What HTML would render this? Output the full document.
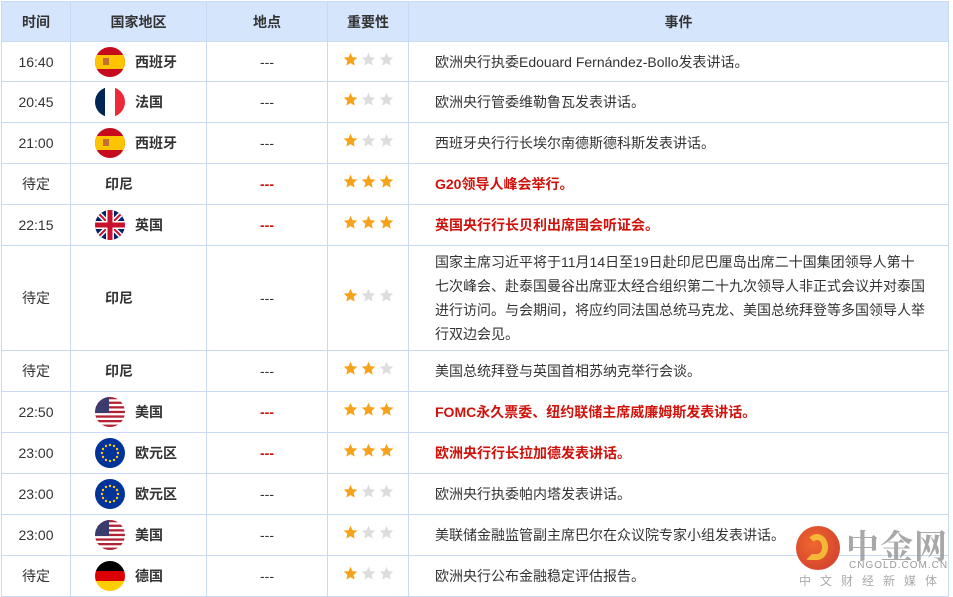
<!DOCTYPE html>
<html><head><meta charset="utf-8"><style>
*{margin:0;padding:0;box-sizing:border-box}
body{width:953px;height:597px;background:#fff;position:relative;overflow:hidden;font-family:"Liberation Sans","Noto Sans CJK SC",sans-serif;font-size:14px;color:#333}
.r{position:absolute;left:1px;width:948px;border-bottom:1px solid #c8daf5}
.c{position:absolute;top:0;height:100%;display:flex;align-items:center;border-right:1px solid #c8daf5}
.h{background:#d5e5fc;font-weight:bold;color:#333}
.c1{left:0;width:70px;justify-content:center;border-left:1px solid #c8daf5}
.c2{left:70px;width:136px}
.c3{left:206px;width:121px;justify-content:center}
.c4{left:327px;width:81px;padding-left:15px}
.c5{left:408px;width:540px;padding-left:26px;line-height:22px}
.h .c{justify-content:center;padding:0}
.flag{width:30px;height:30px;margin-left:24px;margin-right:10px;border-radius:50%;overflow:hidden;flex:none}
.nf{padding-left:34px}
.red{color:#d0120b;font-weight:bold}
.st{display:flex;gap:3px;margin-top:-5px}
</style></head><body>
<svg width="0" height="0" style="position:absolute"><defs>
<symbol id="s" viewBox="0 0 20 20"><path d="M10 1l2.6 5.9 6.4.6-4.8 4.3 1.4 6.3L10 14.8 4.4 18.1l1.4-6.3L1 7.5l6.4-.6z"/></symbol>
<symbol id="es" viewBox="0 0 30 30"><rect width="30" height="30" fill="#c60b1e"/><rect y="8" width="30" height="14" fill="#ffc400"/><rect x="8" y="11" width="6" height="7" fill="#c07030"/></symbol>
<symbol id="fr" viewBox="0 0 30 30"><rect width="10" height="30" fill="#002654"/><rect x="10" width="10" height="30" fill="#fff"/><rect x="20" width="10" height="30" fill="#ed2939"/></symbol>
<symbol id="gb" viewBox="0 0 30 30"><rect width="30" height="30" fill="#012169"/><path d="M0 0L30 30M30 0L0 30" stroke="#fff" stroke-width="5"/><path d="M0 0L30 30M30 0L0 30" stroke="#c8102e" stroke-width="2"/><path d="M15 0V30M0 15H30" stroke="#fff" stroke-width="8"/><path d="M15 0V30M0 15H30" stroke="#c8102e" stroke-width="5"/></symbol>
<symbol id="us" viewBox="0 0 30 30"><rect width="30" height="30" fill="#fff"/><g fill="#b22234"><rect y="0" width="30" height="2.3"/><rect y="4.6" width="30" height="2.3"/><rect y="9.2" width="30" height="2.3"/><rect y="13.8" width="30" height="2.3"/><rect y="18.4" width="30" height="2.3"/><rect y="23" width="30" height="2.3"/><rect y="27.6" width="30" height="2.4"/></g><rect width="14" height="16" fill="#3c3b6e"/></symbol>
<symbol id="eu" viewBox="0 0 30 30"><rect width="30" height="30" fill="#003399"/><g fill="#ffcc00"><circle cx="15" cy="7" r="1.2"/><circle cx="15" cy="23" r="1.2"/><circle cx="7" cy="15" r="1.2"/><circle cx="23" cy="15" r="1.2"/><circle cx="19" cy="8" r="1.2"/><circle cx="11" cy="8" r="1.2"/><circle cx="19" cy="22" r="1.2"/><circle cx="11" cy="22" r="1.2"/><circle cx="8" cy="11" r="1.2"/><circle cx="22" cy="11" r="1.2"/><circle cx="8" cy="19" r="1.2"/><circle cx="22" cy="19" r="1.2"/></g></symbol>
<symbol id="de" viewBox="0 0 30 30"><rect width="30" height="10" fill="#000"/><rect y="10" width="30" height="10" fill="#dd0000"/><rect y="20" width="30" height="10" fill="#ffce00"/></symbol>
</defs></svg>

<div class="r h" style="top:1px;height:41px;border-top:1px solid #c8daf5"><div class="c c1">时间</div><div class="c c2">国家地区</div><div class="c c3">地点</div><div class="c c4">重要性</div><div class="c c5">事件</div></div>

<div class="r" style="top:42px;height:40px"><div class="c c1">16:40</div><div class="c c2"><svg class="flag"><use href="#es"/></svg><b>西班牙</b></div><div class="c c3">---</div><div class="c c4"><div class="st"><svg width="15" height="15" fill="#f7a21b"><use href="#s"/></svg><svg width="15" height="15" fill="#ddd"><use href="#s"/></svg><svg width="15" height="15" fill="#ddd"><use href="#s"/></svg></div></div><div class="c c5">欧洲央行执委Edouard Fernández-Bollo发表讲话。</div></div>

<div class="r" style="top:82px;height:41px"><div class="c c1">20:45</div><div class="c c2"><svg class="flag"><use href="#fr"/></svg><b>法国</b></div><div class="c c3">---</div><div class="c c4"><div class="st"><svg width="15" height="15" fill="#f7a21b"><use href="#s"/></svg><svg width="15" height="15" fill="#ddd"><use href="#s"/></svg><svg width="15" height="15" fill="#ddd"><use href="#s"/></svg></div></div><div class="c c5">欧洲央行管委维勒鲁瓦发表讲话。</div></div>

<div class="r" style="top:123px;height:41px"><div class="c c1">21:00</div><div class="c c2"><svg class="flag"><use href="#es"/></svg><b>西班牙</b></div><div class="c c3">---</div><div class="c c4"><div class="st"><svg width="15" height="15" fill="#f7a21b"><use href="#s"/></svg><svg width="15" height="15" fill="#ddd"><use href="#s"/></svg><svg width="15" height="15" fill="#ddd"><use href="#s"/></svg></div></div><div class="c c5">西班牙央行行长埃尔南德斯德科斯发表讲话。</div></div>

<div class="r" style="top:164px;height:41px"><div class="c c1">待定</div><div class="c c2 nf"><b>印尼</b></div><div class="c c3 red">---</div><div class="c c4"><div class="st"><svg width="15" height="15" fill="#f7a21b"><use href="#s"/></svg><svg width="15" height="15" fill="#f7a21b"><use href="#s"/></svg><svg width="15" height="15" fill="#f7a21b"><use href="#s"/></svg></div></div><div class="c c5 red">G20领导人峰会举行。</div></div>

<div class="r" style="top:205px;height:41px"><div class="c c1">22:15</div><div class="c c2"><svg class="flag"><use href="#gb"/></svg><b>英国</b></div><div class="c c3 red">---</div><div class="c c4"><div class="st"><svg width="15" height="15" fill="#f7a21b"><use href="#s"/></svg><svg width="15" height="15" fill="#f7a21b"><use href="#s"/></svg><svg width="15" height="15" fill="#f7a21b"><use href="#s"/></svg></div></div><div class="c c5 red">英国央行行长贝利出席国会听证会。</div></div>

<div class="r" style="top:246px;height:105px"><div class="c c1">待定</div><div class="c c2 nf"><b>印尼</b></div><div class="c c3">---</div><div class="c c4"><div class="st"><svg width="15" height="15" fill="#f7a21b"><use href="#s"/></svg><svg width="15" height="15" fill="#ddd"><use href="#s"/></svg><svg width="15" height="15" fill="#ddd"><use href="#s"/></svg></div></div><div class="c c5" style="line-height:24px;white-space:nowrap">国家主席习近平将于11月14日至19日赴印尼巴厘岛出席二十国集团领导人第十<br>七次峰会、赴泰国曼谷出席亚太经合组织第二十九次领导人非正式会议并对泰国<br>进行访问。与会期间，将应约同法国总统马克龙、美国总统拜登等多国领导人举<br>行双边会见。</div></div>

<div class="r" style="top:351px;height:41px"><div class="c c1">待定</div><div class="c c2 nf"><b>印尼</b></div><div class="c c3">---</div><div class="c c4"><div class="st"><svg width="15" height="15" fill="#f7a21b"><use href="#s"/></svg><svg width="15" height="15" fill="#f7a21b"><use href="#s"/></svg><svg width="15" height="15" fill="#ddd"><use href="#s"/></svg></div></div><div class="c c5">美国总统拜登与英国首相苏纳克举行会谈。</div></div>

<div class="r" style="top:392px;height:41px"><div class="c c1">22:50</div><div class="c c2"><svg class="flag"><use href="#us"/></svg><b>美国</b></div><div class="c c3 red">---</div><div class="c c4"><div class="st"><svg width="15" height="15" fill="#f7a21b"><use href="#s"/></svg><svg width="15" height="15" fill="#f7a21b"><use href="#s"/></svg><svg width="15" height="15" fill="#f7a21b"><use href="#s"/></svg></div></div><div class="c c5 red">FOMC永久票委、纽约联储主席威廉姆斯发表讲话。</div></div>

<div class="r" style="top:433px;height:41px"><div class="c c1">23:00</div><div class="c c2"><svg class="flag"><use href="#eu"/></svg><b>欧元区</b></div><div class="c c3 red">---</div><div class="c c4"><div class="st"><svg width="15" height="15" fill="#f7a21b"><use href="#s"/></svg><svg width="15" height="15" fill="#f7a21b"><use href="#s"/></svg><svg width="15" height="15" fill="#f7a21b"><use href="#s"/></svg></div></div><div class="c c5 red">欧洲央行行长拉加德发表讲话。</div></div>

<div class="r" style="top:474px;height:41px"><div class="c c1">23:00</div><div class="c c2"><svg class="flag"><use href="#eu"/></svg><b>欧元区</b></div><div class="c c3">---</div><div class="c c4"><div class="st"><svg width="15" height="15" fill="#f7a21b"><use href="#s"/></svg><svg width="15" height="15" fill="#ddd"><use href="#s"/></svg><svg width="15" height="15" fill="#ddd"><use href="#s"/></svg></div></div><div class="c c5">欧洲央行执委帕内塔发表讲话。</div></div>

<div class="r" style="top:515px;height:41px"><div class="c c1">23:00</div><div class="c c2"><svg class="flag"><use href="#us"/></svg><b>美国</b></div><div class="c c3">---</div><div class="c c4"><div class="st"><svg width="15" height="15" fill="#f7a21b"><use href="#s"/></svg><svg width="15" height="15" fill="#ddd"><use href="#s"/></svg><svg width="15" height="15" fill="#ddd"><use href="#s"/></svg></div></div><div class="c c5">美联储金融监管副主席巴尔在众议院专家小组发表讲话。</div></div>

<div class="r" style="top:556px;height:41px"><div class="c c1">待定</div><div class="c c2"><svg class="flag"><use href="#de"/></svg><b>德国</b></div><div class="c c3">---</div><div class="c c4"><div class="st"><svg width="15" height="15" fill="#f7a21b"><use href="#s"/></svg><svg width="15" height="15" fill="#ddd"><use href="#s"/></svg><svg width="15" height="15" fill="#ddd"><use href="#s"/></svg></div></div><div class="c c5">欧洲央行公布金融稳定评估报告。</div></div>

<div style="position:absolute;left:796px;top:526px;width:44px;height:44px;border-radius:50%;background:radial-gradient(circle at 40% 40%,#ee5a1e,#c8281a);opacity:.92"></div>
<div style="position:absolute;left:806px;top:534px;width:22px;height:26px;border:6px solid #f7c23a;border-radius:50% 50% 50% 10%;border-left-color:transparent;opacity:.9"></div>
<div style="position:absolute;left:846px;top:521px;font-size:33px;font-weight:bold;color:#999;letter-spacing:1px;font-family:'Noto Serif CJK SC',serif;opacity:.85">中金网</div>
<div style="position:absolute;left:849px;top:560px;font-size:10px;color:#999;letter-spacing:1px">CNGOLD.COM.CN</div>
<div style="position:absolute;left:799px;top:572px;font-size:12px;color:#aaa;letter-spacing:9px">中文财经新媒体</div>
</body></html>
